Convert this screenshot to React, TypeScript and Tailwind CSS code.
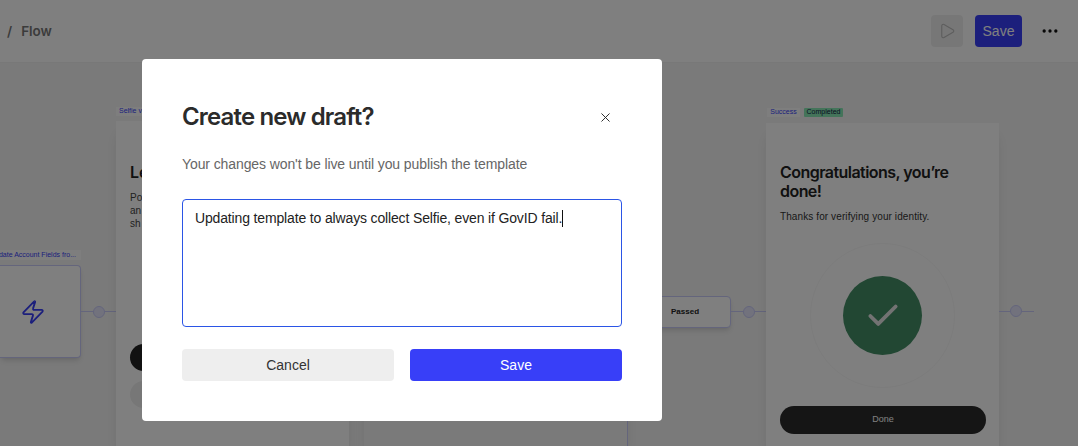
import React from 'react';
import { Play, X, Zap, Check, MoreHorizontal } from 'lucide-react';

const App: React.FC = () => {
    return (
        <div className="relative h-[446px] w-[1078px] overflow-hidden bg-[#f5f5f5] font-['Liberation_Sans',sans-serif] text-[#222]">
            {/* Top bar */}
            <header className="flex h-[63px] items-center border-b border-[#f0f0f0] bg-white pl-[7px] pr-[18px] font-['Inter',sans-serif]">
                <span className="text-[13.5px] font-semibold text-[#777]">/</span>
                <span className="ml-[9px] text-[13.5px] font-semibold text-[#777]">Flow</span>
                <div className="ml-auto flex items-center">
                    <button className="flex h-8 w-8 items-center justify-center rounded bg-[#efefef] text-[#bbb]">
                        <Play size={18} strokeWidth={1.5} />
                    </button>
                    <button className="ml-3 h-8 w-[47px] rounded bg-[#383ff8] font-['Liberation_Sans',sans-serif] text-[14px] text-white">
                        Save
                    </button>
                    <MoreHorizontal size={20} strokeWidth={2} className="ml-[18px] text-[#111]" />
                </div>
            </header>

            {/* Flow canvas */}
            <div className="absolute left-0 top-[250px] w-[81px]">
                <div className="flex h-[10px] w-[81px] items-center justify-end overflow-hidden bg-white/80 pr-[5px] text-[7px] whitespace-nowrap text-[#383ff8]">
                    Update Account Fields fro...
                </div>
                <div className="mt-[5px] flex h-[93px] items-center justify-center rounded-r border border-l-0 border-[#c8caf8] bg-white shadow-md">
                    <Zap size={26} strokeWidth={1.7} className="ml-[-14px] text-[#383ff8]" />
                </div>
            </div>
            <div className="absolute left-[81px] top-[311px] h-px w-[35px] bg-[#c8caf8]" />
            <div className="absolute left-[93px] top-[306px] h-3 w-3 rounded-full border border-[#c8caf8] bg-[#e4e5fb]" />

            <div className="absolute left-[116px] top-[107px] flex h-[9px] w-[40px] items-center bg-white/80 pl-[3px] text-[7px] text-[#383ff8]">
                Selfie v
            </div>
            <div className="absolute left-[116px] top-[121px] h-[325px] w-[233px] bg-white px-[14px] pt-[41px] shadow-lg">
                <div className="font-['Inter',sans-serif] text-[16px] leading-[20px] font-semibold">Le</div>
                <div className="mt-[9px] text-[10px] leading-[13px] text-[#444]">
                    Po
                    <br />
                    an
                    <br />
                    sh
                </div>
                <div className="mt-[114px] h-[27px] w-[200px] rounded-full bg-[#222]" />
                <div className="mt-[10px] h-[27px] w-[200px] rounded-full bg-[#efefef]" />
            </div>

            <div className="absolute left-[364px] top-[121px] h-[325px] w-[264px] border-r border-[#c8caf8] bg-[#f5f5f5] shadow-lg" />

            <div className="absolute left-[650px] top-[296px] flex h-[32px] w-[81px] items-center rounded border border-[#c8caf8] bg-white pl-[20px] text-[8px] font-bold shadow-md">
                Passed
            </div>
            <div className="absolute left-[731px] top-[311px] h-px w-[36px] bg-[#c8caf8]" />
            <div className="absolute left-[743px] top-[306px] h-3 w-3 rounded-full border border-[#c8caf8] bg-[#e4e5fb]" />

            <div className="absolute left-[767px] top-[108px] flex items-center gap-1 text-[7px]">
                <span className="flex h-[9px] w-[33px] items-center justify-center bg-white/80 text-[#383ff8]">Success</span>
                <span className="flex h-[9px] w-[39px] items-center justify-center rounded-[1px] bg-[#88e8b4] text-[#124]">Completed</span>
            </div>
            <div className="absolute left-[766px] top-[123px] h-[323px] w-[233px] bg-white px-[14px] pt-[40px] shadow-lg">
                <div className="font-['Inter',sans-serif] text-[16px] leading-[19px] font-semibold tracking-[-0.55px]">
                    Congratulations, you’re done!
                </div>
                <div className="mt-[9px] text-[10px] leading-[13px] tracking-[0.1px] text-[#333]">Thanks for verifying your identity.</div>
                <div className="mx-auto mt-[20px] flex h-[145px] w-[145px] items-center justify-center rounded-full border border-[#f8f8f8]">
                    <div className="flex h-[79px] w-[79px] items-center justify-center rounded-full bg-[#448e66]">
                        <Check size={38} strokeWidth={2.4} className="text-[#e6e6e6]" />
                    </div>
                </div>
                <div className="mt-[18px] flex h-[28px] w-[206px] items-center justify-center rounded-full bg-[#2a2a2a] text-[9px] text-white">
                    Done
                </div>
            </div>
            <div className="absolute left-[999px] top-[311px] h-px w-[35px] bg-[#c8caf8]" />
            <div className="absolute left-[1010px] top-[305px] h-3 w-3 rounded-full border border-[#c8caf8] bg-[#e4e5fb]" />

            {/* Overlay + dialog */}
            <div className="absolute inset-0 bg-black/50 pl-[142px] pt-[59px]">
                <div className="flex h-[362px] w-[520px] flex-col rounded bg-white px-10 pt-[42px]">
                    <div className="flex items-center justify-between">
                        <h2 className="font-['Inter',sans-serif] text-[24px] leading-[32px] font-semibold tracking-[-0.85px] text-[#2b2b2b]">
                            Create new draft?
                        </h2>
                        <X size={15} strokeWidth={1.5} className="mr-[9px] text-[#222]" />
                    </div>
                    <p className="mt-[21px] text-[14px] leading-5 tracking-[-0.1px] text-[#666]">
                        Your changes won't be live until you publish the template
                    </p>
                    <div className="mt-[25px] h-[128px] rounded border border-[#2b55e6] px-3 py-2 text-[14px] leading-5 tracking-[-0.15px] text-[#222]">
                        Updating template to always collect Selfie, even if GovID fail.
                        <span className="inline-block h-[17px] w-px bg-[#111] align-[-4px]" />
                    </div>
                    <div className="mt-[22px] flex gap-4">
                        <button className="h-8 flex-1 rounded bg-[#eeeeee] text-[14px] text-[#333]">Cancel</button>
                        <button className="h-8 flex-1 rounded bg-[#383ff8] text-[14px] text-white">Save</button>
                    </div>
                </div>
            </div>
        </div>
    );
};

export default App;
